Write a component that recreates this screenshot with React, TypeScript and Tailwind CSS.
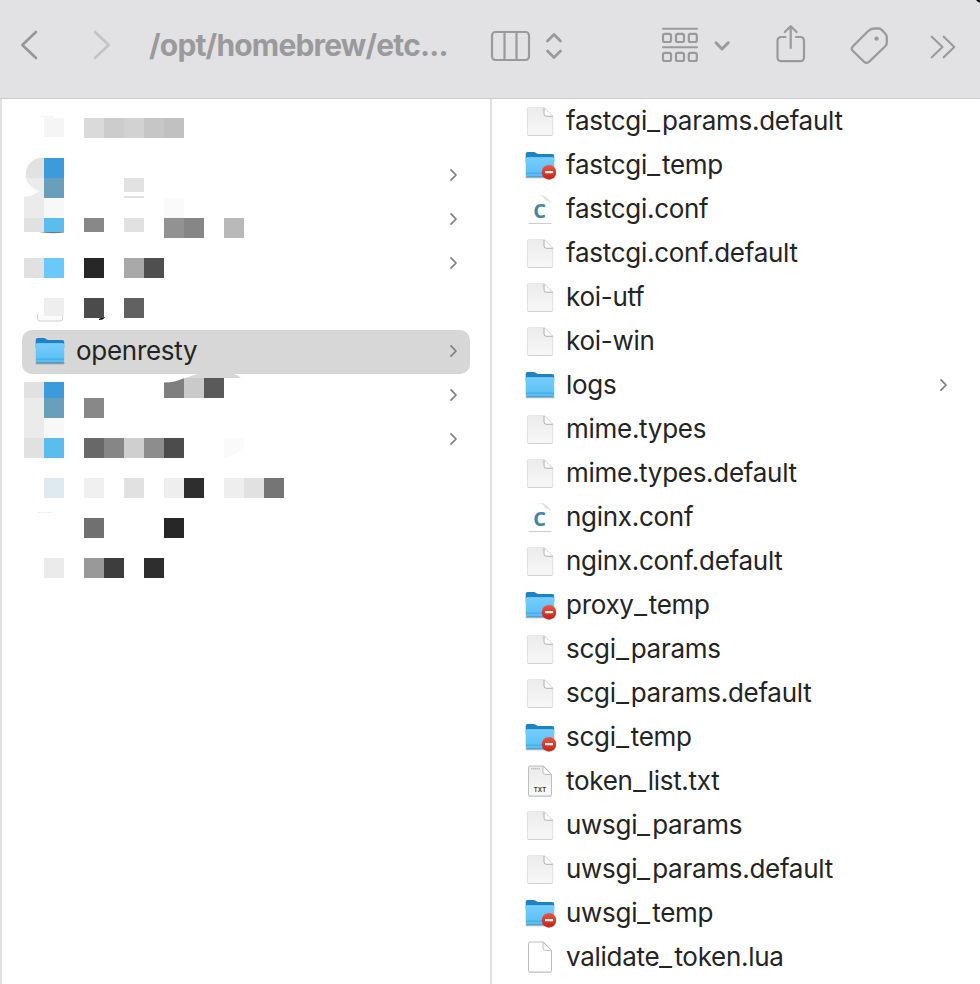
import React from "react";

type Kind = "doc" | "folder" | "denied" | "c" | "txt" | "blank";

const FILES: { name: string; kind: Kind; open?: boolean }[] = [
  { name: "fastcgi_params.default", kind: "doc" },
  { name: "fastcgi_temp", kind: "denied" },
  { name: "fastcgi.conf", kind: "c" },
  { name: "fastcgi.conf.default", kind: "doc" },
  { name: "koi-utf", kind: "doc" },
  { name: "koi-win", kind: "doc" },
  { name: "logs", kind: "folder", open: true },
  { name: "mime.types", kind: "doc" },
  { name: "mime.types.default", kind: "doc" },
  { name: "nginx.conf", kind: "c" },
  { name: "nginx.conf.default", kind: "doc" },
  { name: "proxy_temp", kind: "denied" },
  { name: "scgi_params", kind: "doc" },
  { name: "scgi_params.default", kind: "doc" },
  { name: "scgi_temp", kind: "denied" },
  { name: "token_list.txt", kind: "txt" },
  { name: "uwsgi_params", kind: "doc" },
  { name: "uwsgi_params.default", kind: "doc" },
  { name: "uwsgi_temp", kind: "denied" },
  { name: "validate_token.lua", kind: "blank" },
];

const PARENT_ROWS = [
  { open: false },
  { open: true },
  { open: true },
  { open: true },
  { open: false },
  { open: true, name: "openresty" },
  { open: true },
  { open: true },
];

// Censored area: x, y, width, height, fill (relative to the column's top left corner)
const BLOCKS: [number, number, number, number, string][] = [
  [44, 19, 20, 19, "#f5f5f5"],
  [84, 19, 20, 20, "#dadada"],
  [104, 19, 20, 20, "#cccccc"],
  [124, 19, 20, 20, "#d2d2d2"],
  [144, 19, 20, 20, "#c6c6c6"],
  [164, 19, 20, 20, "#c1c1c1"],
  [44, 59, 20, 20, "#3e9bdb"],
  [44, 79, 20, 20, "#699fbd"],
  [124, 79, 20, 14, "#e2e2e2"],
  [124, 97, 20, 2, "#e2e2e2"],
  [24, 99, 20, 20, "#ebebeb"],
  [44, 99, 20, 20, "#f8f8f8"],
  [164, 99, 20, 20, "#fafafa"],
  [24, 119, 20, 14, "#e1e1e1"],
  [44, 119, 20, 14, "#5bbcee"],
  [84, 119, 20, 14, "#888888"],
  [124, 119, 20, 14, "#e1e1e1"],
  [164, 119, 20, 20, "#929292"],
  [184, 119, 20, 20, "#868686"],
  [224, 119, 20, 20, "#b9b9b9"],
  [24, 159, 20, 20, "#e1e1e1"],
  [44, 159, 20, 20, "#6ac8fb"],
  [84, 159, 20, 20, "#272727"],
  [124, 159, 20, 20, "#a9a9a9"],
  [144, 159, 20, 20, "#4f4f4f"],
  [44, 199, 20, 18, "#eeeeee"],
  [84, 199, 20, 20, "#4b4b4b"],
  [124, 199, 20, 20, "#616161"],
  [24, 283, 20, 16, "#e1e1e1"],
  [44, 283, 20, 16, "#3e9bdb"],
  [184, 279, 20, 20, "#cacaca"],
  [204, 279, 20, 20, "#5a5a5a"],
  [24, 299, 20, 40, "#ebebeb"],
  [44, 299, 20, 20, "#699fbd"],
  [84, 299, 20, 20, "#888888"],
  [44, 319, 20, 20, "#f8f8f8"],
  [24, 339, 20, 20, "#e1e1e1"],
  [44, 339, 20, 20, "#5bbcee"],
  [84, 339, 20, 20, "#686868"],
  [104, 339, 20, 20, "#868686"],
  [124, 339, 20, 20, "#cfcfcf"],
  [144, 339, 20, 20, "#8d8d8d"],
  [164, 339, 20, 20, "#4c4c4c"],
  [44, 379, 20, 20, "#dfeaf0"],
  [84, 379, 20, 20, "#f0f0f0"],
  [124, 379, 20, 20, "#e1e1e1"],
  [164, 379, 20, 20, "#eeeeee"],
  [184, 379, 20, 20, "#2e2e2e"],
  [224, 379, 20, 20, "#eeeeee"],
  [244, 379, 20, 20, "#e1e1e1"],
  [264, 379, 20, 20, "#757575"],
  [84, 419, 20, 20, "#707070"],
  [164, 419, 20, 20, "#272727"],
  [44, 459, 20, 20, "#ebebeb"],
  [84, 459, 20, 20, "#999999"],
  [104, 459, 20, 20, "#3d3d3d"],
  [144, 459, 20, 20, "#2e2e2e"],
];

function Mosaic() {
  return (
    <svg className="pointer-events-none absolute left-0 top-0" width="300" height="500" viewBox="0 0 300 500">
      <path d="M37 18q8 -2 17 -1v1.500h-10z" fill="#f4f4f4" />
      <path d="M44 59h-5a17 17 0 0 0 -13 20h18z" fill="#e2e2e2" />
      <path d="M26 79h18v20h-20v-1q9 -1 15 -6q-11 -4 -13 -13z" fill="#ebebeb" />
      <path d="M36 132.500h28v1q-14 2 -28 -1z" fill="#777777" />
      <path d="M37.500 215v5q0 2 2.500 2h20q2.500 0 2.500 -2v-4" fill="#fafafa" stroke="#cccccc" strokeWidth="0.900" />
      <path d="M99 220q2 -2 6 -2q-1 3 -6 3z" fill="#111111" />
      <path d="M164 283.500q11 0 20 -4.500v20h-20z" fill="#7f7f7f" />
      <path d="M180 279q9 -1 18 -4h36q4 1 7 4z" fill="#d7d7d7" />
      <path d="M163 282.500q18 -1 33 -7.500h-33z" fill="#ffffff" />
      <path d="M224 339h20v8q-7 10 -20 12z" fill="#fafafa" />
      <path d="M38 413.500h14" stroke="#ececec" strokeWidth="0.800" />
      {BLOCKS.map(([x, y, w, h, fill], i) => (
        <rect key={i} x={x} y={y} width={w} height={h} fill={fill} />
      ))}
    </svg>
  );
}

function FolderIcon({ denied = false }: { denied?: boolean }) {
  return (
    <svg width="32" height="32" viewBox="0 0 32 32" className="shrink-0">
      <defs>
        <linearGradient id="front" x1="0" y1="0" x2="0" y2="1">
          <stop offset="0" stopColor="#75cefc" />
          <stop offset="1" stopColor="#57bdf5" />
        </linearGradient>
        <linearGradient id="ban" x1="0" y1="0" x2="0" y2="1">
          <stop offset="0" stopColor="#ed5545" />
          <stop offset="1" stopColor="#c92016" />
        </linearGradient>
      </defs>
      <path d="M2.500 28.200h27" stroke="#000" strokeOpacity="0.300" strokeWidth="2" strokeLinecap="round" />
      <path d="M1.700 5q0-2 2-2h6.300q1 0 2 .9l.9.700q.6.400 1.400.400h13.900q2 0 2 2v6H1.700z" fill="#1d83c4" />
      <path d="M1.700 10q0-1.500 1.500-1.500h25.500q1.500 0 1.500 1.500v16q0 1.800-1.800 1.800H3.500q-1.800 0-1.800-1.800z" fill="url(#front)" />
      <path d="M2.500 8.700h27" stroke="#8ddafe" strokeWidth="0.700" />
      <path d="M2 24.200h28" stroke="#3ba6df" strokeWidth="0.900" />
      <path d="M2.500 27.600h27" stroke="#3399d3" strokeWidth="0.800" />
      {denied && (
        <g>
          <circle cx="25" cy="24" r="7.200" fill="#000" fillOpacity="0.200" />
          <circle cx="25" cy="23.200" r="7.200" fill="url(#ban)" />
          <rect x="21" y="21.900" width="8" height="2.300" rx="0.400" fill="#fff" />
        </g>
      )}
    </svg>
  );
}

function PageIcon({ kind }: { kind: Kind }) {
  if (kind === "c") {
    return (
      <svg width="32" height="32" viewBox="0 0 32 32" className="shrink-0">
        <path d="M5 2h12q6 0 10.500 9v18.500H5z" fill="#fefefe" />
        <path d="M5 2.300h11q3 .5 5 4.700q4 1 6.500 4q-2-5-6-7.500q-2-1.400-5-1.400z" fill="#e2e2e2" />
        <path d="M4.500 30.500h23" stroke="#cdcdcd" strokeWidth="1" />
        <text x="15.700" y="25.300" textAnchor="middle" fill="#4385a3" fontFamily="'Open Sans', sans-serif" fontWeight="700" fontSize="20">C</text>
      </svg>
    );
  }
  const plain = kind === "doc";
  const body = plain
    ? "M3.300 4.500q0-2 2-2H20l8.800 8.800v17q0 2-2 2H5.300q-2 0-2-2z"
    : "M4.500 2.500q0-1.500 1.500-1.500h13.500l8 8.500v20q0 1.500-1.500 1.500H6q-1.500 0-1.500-1.500z";
  return (
    <svg width="32" height="32" viewBox="0 0 32 32" className="shrink-0">
      <defs>
        <linearGradient id="paper" x1="0" y1="0" x2="0" y2="1">
          <stop offset="0" stopColor="#ebebeb" />
          <stop offset="1" stopColor="#f8f8f8" />
        </linearGradient>
      </defs>
      <path d={body} transform="translate(0 .6)" fill="#bbbbbb" />
      <path d={body} fill={kind === "blank" ? "#ffffff" : "url(#paper)"} stroke={plain ? "#dcdcdc" : "#b8b8b8"} strokeWidth={plain ? 0.6 : 0.9} />
      {plain ? (
        <>
          <path d="M20 2.500v6.300q0 2.500 2.500 2.500h6.300z" fill="#fcfcfc" stroke="#cfcfcf" strokeWidth="0.700" />
          <path d="M20 3v5.800q0 2.500 2.500 2.500h6" fill="none" stroke="#a8a8a8" strokeWidth="0.700" />
        </>
      ) : (
        <path d="M19 1v6q0 2.500 2.500 2.500h6z" fill="#fbfbfb" stroke="#b2b2b2" strokeWidth="0.800" />
      )}
      {kind === "txt" && (
        <g>
          <path d="M7 3.800h9" stroke="#aaaaaa" strokeWidth="1" strokeDasharray="1.500 .5" />
          <text x="16" y="27.300" textAnchor="middle" fill="#333333" fontFamily="Inter, sans-serif" fontWeight="600" fontSize="6" letterSpacing="0.200">TXT</text>
        </g>
      )}
    </svg>
  );
}

function RowChevron() {
  return (
    <svg width="10" height="14" viewBox="0 0 10 14" className="ml-auto shrink-0" fill="none" stroke="#7f7f7f" strokeWidth="1.700" strokeLinecap="round" strokeLinejoin="round">
      <path d="M3 1.800L8 7L3 12.200" />
    </svg>
  );
}

function FileName({ name }: { name: string }) {
  const [head, tail] = name.split("_");
  return (
    <span className="ml-[10px] flex whitespace-nowrap text-[26px] leading-8 tracking-[-0.28px]">
      <span>{head}</span>
      {tail && <span className="inline-block w-[15px] origin-left scale-x-110">_</span>}
      {tail && <span>{tail}</span>}
    </span>
  );
}

export default function App() {
  return (
    <div className="flex h-[984px] w-[980px] flex-col overflow-hidden bg-white font-['Inter',sans-serif] text-[#242424]">
      <header className="relative flex h-[99px] shrink-0 items-start border-b border-[#cdcdcf] bg-[#e2e2e4] text-[#9a9a9c]">
        <svg width="149" height="98" viewBox="0 0 149 98" fill="none" strokeWidth="2.600" strokeLinecap="round" strokeLinejoin="round" className="shrink-0">
          <path d="M36 32L22.300 45L36 58" stroke="#969698" />
          <path d="M95 32L108.700 45L95 58" stroke="#c3c3c5" />
        </svg>
        <h1 className="mt-[27px] w-[301px] whitespace-nowrap text-[30px] font-bold leading-[36px] tracking-[-0.83px]">/opt/homebrew/etc...</h1>
        <svg width="530" height="98" viewBox="450 0 530 98" fill="none" stroke="#9a9a9c" strokeWidth="2.200" strokeLinecap="round" strokeLinejoin="round" className="shrink-0">
          <rect x="492" y="32" width="37" height="28" rx="3.500" />
          <path d="M504.500 32v28M516.500 32v28" />
          <path d="M547.500 41L554 34.500L560.500 41M547.500 51L554 57.500L560.500 51" strokeWidth="2.800" />
          <path d="M663 28.700h34M663 47.300h34" strokeWidth="2.100" />
          {[33.8, 52.8].map((y) =>
            [663, 676, 688.8].map((x) => <rect key={`${x}-${y}`} x={x} y={y} width="8" height="8.200" rx="1.800" strokeWidth="2.200" />)
          )}
          <path d="M716 42.800L722 49L728.200 42.800" strokeWidth="3" />
          <path d="M785.500 37h-4q-4 0-4 4v16.200q0 4 4 4H800q4 0 4-4V41q0-4-4-4h-4M790.700 48V26.300M784.800 32L790.700 26.200L796.600 32" strokeWidth="2.200" />
          <path d="M853 46.300L868.500 30.800Q871 28.500 874 28.500h4.500q2 0 3.200 1.400l3.700 3.900q1.400 1.500 1.400 3.600v5.300q0 2-1.500 3.500L869 61.800q-2.500 2-5 0L852.500 50.500q-2-2 .5-4.200z" strokeWidth="2.300" />
          <circle cx="876.500" cy="38.600" r="2.200" fill="#9a9a9c" stroke="none" />
          <path d="M931.800 36.700L942.500 47L931.800 57.300M943.700 36.700L954.300 47L943.700 57.300" strokeWidth="2.100" />
        </svg>
        <svg width="4" height="3" viewBox="0 0 4 3" className="absolute right-0 top-0">
          <path d="M0 0h4v2.500q-2 0-4-2.500z" fill="#111" />
        </svg>
      </header>
      <main className="flex min-h-0 flex-1">
        <section className="relative w-[492px] shrink-0 border-x-2 border-[#e0e0e0] px-5 pt-[11px]">
          <ul>
            {PARENT_ROWS.map((row, i) => (
              <li key={i} className={row.name ? "flex h-11 items-center rounded-[10px] bg-[#d7d7d7] px-3 pb-0.5" : "flex h-11 items-center px-3 pb-0.5"}>
                {row.name && (
                  <>
                    <FolderIcon />
                    <FileName name={row.name} />
                  </>
                )}
                {row.open && <RowChevron />}
              </li>
            ))}
          </ul>
          <div className="absolute -left-0.5 top-0">
            <Mosaic />
          </div>
        </section>
        <section className="flex-1 px-8">
          <ul>
            {FILES.map((file) => (
              <li key={file.name} className="flex h-11 items-center">
                {file.kind === "folder" || file.kind === "denied" ? <FolderIcon denied={file.kind === "denied"} /> : <PageIcon kind={file.kind} />}
                <FileName name={file.name} />
                {file.open && <RowChevron />}
              </li>
            ))}
          </ul>
        </section>
      </main>
    </div>
  );
}
